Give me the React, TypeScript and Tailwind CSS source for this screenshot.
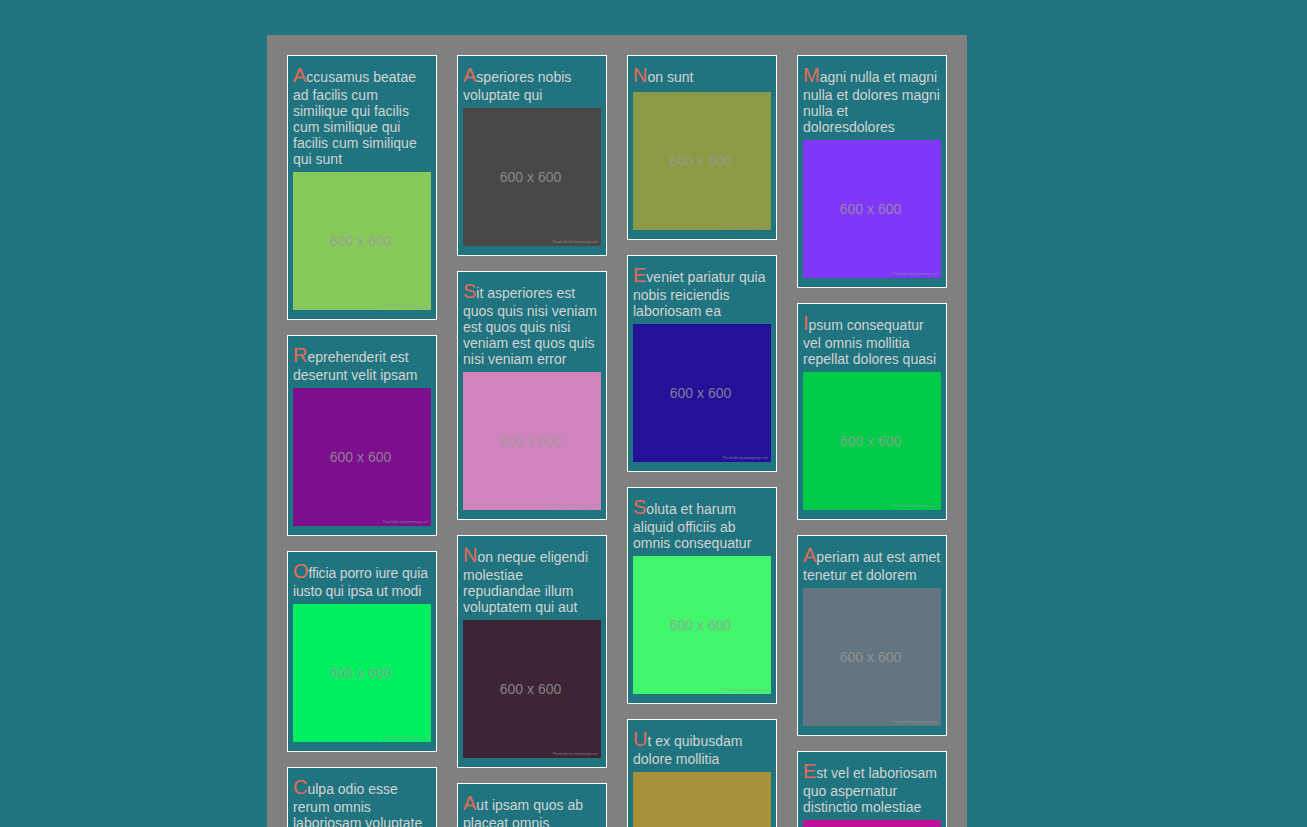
import React from "react";

type Card = { title: string; color: string; tight?: boolean };

// Columns as they stack in the reference
const columns: Card[][] = [
  [
    { title: "Accusamus beatae ad facilis cum similique qui facilis cum similique qui facilis cum similique qui sunt", color: "#88c95c" },
    { title: "Reprehenderit est deserunt velit ipsam", color: "#7b0f8e" },
    { title: "Officia porro iure quia iusto qui ipsa ut modi", color: "#00f060", tight: true },
    { title: "Culpa odio esse rerum omnis laboriosam voluptate quia", color: "#c8a040" },
  ],
  [
    { title: "Asperiores nobis voluptate qui", color: "#4a4846" },
    { title: "Sit asperiores est quos quis nisi veniam est quos quis nisi veniam est quos quis nisi veniam error", color: "#d084bc" },
    { title: "Non neque eligendi molestiae repudiandae illum voluptatem qui aut", color: "#3e2535" },
    { title: "Aut ipsam quos ab placeat omnis", color: "#5a8ad0" },
  ],
  [
    { title: "Non sunt", color: "#8a9a45" },
    { title: "Eveniet pariatur quia nobis reiciendis laboriosam ea", color: "#241199" },
    { title: "Soluta et harum aliquid officiis ab omnis consequatur", color: "#42f66c" },
    { title: "Ut ex quibusdam dolore mollitia", color: "#a89038" },
  ],
  [
    { title: "Magni nulla et magni nulla et dolores magni nulla et doloresdolores", color: "#8037f9" },
    { title: "Ipsum consequatur vel omnis mollitia repellat dolores quasi", color: "#00cc48" },
    { title: "Aperiam aut est amet tenetur et dolorem", color: "#637580" },
    { title: "Est vel et laboriosam quo aspernatur distinctio molestiae", color: "#c0109a" },
  ],
];

const Placeholder = ({ color }: { color: string }) => (
  <div
    className="relative flex h-[138px] w-[138px] items-center justify-center pr-[3px] mb-[4px]"
    style={{ backgroundColor: color }}
  >
    <span className="text-[14px] text-[#9a9a9a]/80">600 x 600</span>
    <span className="absolute bottom-[2px] right-[3px] text-[3px] text-[#9a9a9a]/80">
      Placeholder by dummyimage.com
    </span>
  </div>
);

const Tile = ({ card }: { card: Card }) => (
  <div className="w-[150px] border border-white bg-[#20747f] p-[5px]">
    <p
      className={`pt-[2px] mb-[5px] text-[14px] leading-[16px] text-[#d3d3d3] ${
        card.tight ? "tracking-[-0.15px]" : ""
      }`}
    >
      <span className="text-[20px] leading-[24px] text-[#e66a55]">{card.title[0]}</span>
      {card.title.slice(1)}
    </p>
    <Placeholder color={card.color} />
  </div>
);

export default function App() {
  return (
    <div
      className="min-h-screen bg-[#20747f] pt-[35px]"
      style={{ fontFamily: '"Liberation Sans", Arial, sans-serif' }}
    >
      <div className="ml-[267px] flex w-[700px] gap-[20px] bg-[#808080] p-[20px]">
        {columns.map((col, i) => (
          <div key={i} className="flex flex-col gap-[15px]">
            {col.map((card) => (
              <Tile key={card.title} card={card} />
            ))}
          </div>
        ))}
      </div>
    </div>
  );
}
